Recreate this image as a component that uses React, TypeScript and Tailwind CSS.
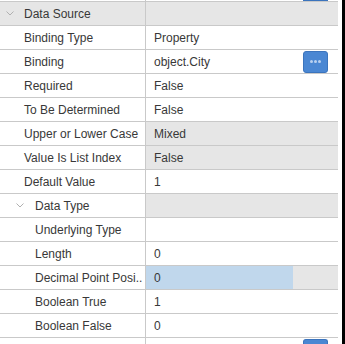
import React from 'react';

interface Row {
    label: string;
    value?: string;
    level: number;
    group?: boolean;
    readOnly?: boolean;
    button?: boolean;
    editing?: boolean;
}

const rows: Row[] = [
    { label: 'Data Source', level: 0, group: true },
    { label: 'Binding Type', value: 'Property', level: 0 },
    { label: 'Binding', value: 'object.City', level: 0, button: true },
    { label: 'Required', value: 'False', level: 0 },
    { label: 'To Be Determined', value: 'False', level: 0 },
    { label: 'Upper or Lower Case', value: 'Mixed', level: 0, readOnly: true },
    { label: 'Value Is List Index', value: 'False', level: 0, readOnly: true },
    { label: 'Default Value', value: '1', level: 0 },
    { label: 'Data Type', level: 1, group: true },
    { label: 'Underlying Type', value: '', level: 1 },
    { label: 'Length', value: '0', level: 1 },
    { label: 'Decimal Point Posi..', value: '0', level: 1, editing: true },
    { label: 'Boolean True', value: '1', level: 1 },
    { label: 'Boolean False', value: '0', level: 1 },
];

const Chevron = () => (
    <svg width="8" height="5" viewBox="0 0 8 5" className="shrink-0">
        <path d="M0.5 0.5 L4 4 L7.5 0.5" fill="none" stroke="#b0b0b0" strokeWidth="1" />
    </svg>
);

const DotsButton = () => (
    <div className="w-[25px] h-[22px] rounded-[3px] bg-[#4a87d3] border border-[#3b74bd] flex items-center justify-center gap-[1px]">
        <span className="w-[3px] h-[3px] rounded-full bg-[#b9d1f0]" />
        <span className="w-[3px] h-[3px] rounded-full bg-[#b9d1f0]" />
        <span className="w-[3px] h-[3px] rounded-full bg-[#b9d1f0]" />
    </div>
);

export default function App() {
    return (
        <div
            className="w-[345px] h-[344px] flex bg-white overflow-hidden text-[12px] text-[#383838]"
            style={{ fontFamily: '"Liberation Sans", Arial, sans-serif' }}
        >
            <div className="w-[338px] flex flex-col">
                {/* partial button from the row above */}
                <div className="h-[2px] flex">
                    <div className="w-[146px] border-r border-[#c9c9c9]" />
                    <div className="flex-1 flex justify-end pr-[10px]">
                        <div className="w-[25px] h-[1px] bg-[#3b74bd]" />
                    </div>
                </div>

                <div className="border-b border-[#c9c9c9]">
                    {rows.map((row) => {
                        const labelPad = row.level === 0 ? 'pl-[24px]' : 'pl-[35px]';
                        return (
                            <div key={row.label} className="h-[24px] flex border-t border-[#c9c9c9]">
                                <div
                                    className={`w-[146px] border-r border-[#c9c9c9] flex items-center relative whitespace-nowrap ${labelPad} ${
                                        row.group && row.level === 0 ? 'bg-[#e6e6e6]' : ''
                                    }`}
                                >
                                    {row.group && (
                                        <span className={`absolute top-[9px] ${row.level === 0 ? 'left-[6px]' : 'left-[16px]'}`}>
                                            <Chevron />
                                        </span>
                                    )}
                                    {row.label}
                                </div>

                                <div
                                    className={`flex-1 flex items-center ${
                                        row.group || row.readOnly || row.editing ? 'bg-[#e6e6e6]' : ''
                                    }`}
                                >
                                    {row.editing ? (
                                        <div className="w-[147px] h-full bg-[#c0d7ec] flex items-center pl-[8px]">{row.value}</div>
                                    ) : (
                                        <div className="flex-1 pl-[8px]">{row.value}</div>
                                    )}
                                    {row.button && (
                                        <div className="pr-[10px]">
                                            <DotsButton />
                                        </div>
                                    )}
                                </div>
                            </div>
                        );
                    })}
                </div>

                {/* next row's button peeking in */}
                <div className="flex-1 flex">
                    <div className="w-[146px] border-r border-[#c9c9c9]" />
                    <div className="flex-1 flex justify-end pr-[10px]">
                        <div className="w-[25px] h-[6px] mt-[1px] rounded-t-[3px] bg-[#4a87d3] border border-b-0 border-[#3b74bd]" />
                    </div>
                </div>
            </div>
            <div className="w-[4px]" />
            <div className="w-[3px] bg-black" />
        </div>
    );
}
